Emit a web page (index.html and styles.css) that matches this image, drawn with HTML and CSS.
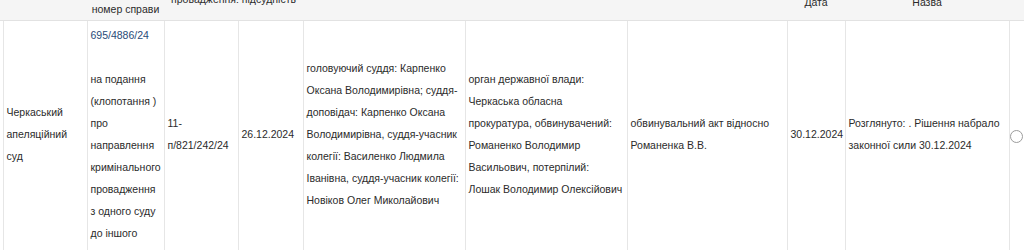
FILE: index.html
```html
<!DOCTYPE html>
<html lang="uk">
<head>
<meta charset="utf-8">
<title>Справи</title>
<link rel="stylesheet" href="styles.css">
</head>
<body>
<div class="page">
  <table class="cases">
    <colgroup>
      <col class="c-gap">
      <col class="c-court">
      <col class="c-case">
      <col class="c-proc">
      <col class="c-recv">
      <col class="c-judges">
      <col class="c-parties">
      <col class="c-subject">
      <col class="c-ddate">
      <col class="c-dname">
      <col class="c-pick">
    </colgroup>
    <thead>
      <tr>
        <th class="th-top"></th>
        <th class="th-top">Суд</th>
        <th>Унікальний номер справи</th>
        <th colspan="2"><span class="th-raised">провадження: підсудність</span></th>
        <th class="th-top">Склад суду</th>
        <th class="th-top">Учасники</th>
        <th class="th-top">Предмет</th>
        <th>Дата</th>
        <th>Назва</th>
        <th></th>
      </tr>
    </thead>
    <tbody>
      <tr>
        <td class="gap"></td>
        <td>Черкаський апеляційний суд</td>
        <td><a class="case-link" href="#">695/4886/24</a><br><br>на подання (клопотання ) про направлення кримінального провадження з одного суду до іншого</td>
        <td>11-п/821/242/24</td>
        <td>26.12.2024</td>
        <td>головуючий суддя: Карпенко Оксана Володимирівна; суддя-доповідач: Карпенко Оксана Володимирівна, суддя-учасник колегії: Василенко Людмила Іванівна, суддя-учасник колегії: Новіков Олег Миколайович</td>
        <td>орган державної влади: Черкаська обласна прокуратура, обвинувачений: Романенко Володимир Васильович, потерпілий: Лошак&nbsp;Володимир Олексійович</td>
        <td>обвинувальний акт відносно Романенка В.В.</td>
        <td>30.12.2024</td>
        <td>Розглянуто: . Рішення набрало законної сили 30.12.2024</td>
        <td class="pick"><input class="pick-radio" type="radio" name="case"></td>
      </tr>
    </tbody>
  </table>
</div>
</body>
</html>
```

FILE: styles.css
```css
html, body {
  margin: 0;
  padding: 0;
  background: #ffffff;
  overflow: hidden;
}

.page {
  width: 1024px;
  font-family: "Liberation Sans", Arial, sans-serif;
  font-size: 10.5px;
  color: #2b2b2b;
}

.cases {
  width: 1024px;
  margin-top: -17px;
  border-collapse: collapse;
  table-layout: fixed;
}

.c-gap { width: 3px; }
.c-court { width: 84px; }
.c-case { width: 77px; }
.c-proc { width: 74px; }
.c-recv { width: 65px; }
.c-judges { width: 162px; }
.c-parties { width: 162px; }
.c-subject { width: 160px; }
.c-ddate { width: 58px; }
.c-dname { width: 164px; }
.c-pick { width: 15px; }

.cases th {
  height: 37px;
  padding: 0 3px;
  background: #f5f5f5;
  border-bottom: 1px solid #e2e2e2;
  font-weight: normal;
  line-height: 14px;
  text-align: center;
  vertical-align: middle;
  color: #2b2b2b;
}

.cases th.th-top {
  vertical-align: top;
}

.th-raised {
  display: block;
  padding-bottom: 6px;
}

.cases td {
  padding: 3px 1px 6px 3px;
  border: 1px solid #e6e6e6;
  line-height: 22px;
  vertical-align: middle;
  text-align: left;
}

.cases td.gap {
  padding: 0;
  border: none;
}

.case-link {
  color: #2a4a78;
  text-decoration: none;
}

.cases td.pick {
  padding: 0;
  text-align: center;
  border-right: none;
}

.pick-radio {
  appearance: none;
  -webkit-appearance: none;
  box-sizing: border-box;
  width: 13px;
  height: 13px;
  margin: 0;
  border: 1px solid #9c9c9c;
  border-radius: 50%;
  background: #ffffff;
  vertical-align: middle;
}
```
